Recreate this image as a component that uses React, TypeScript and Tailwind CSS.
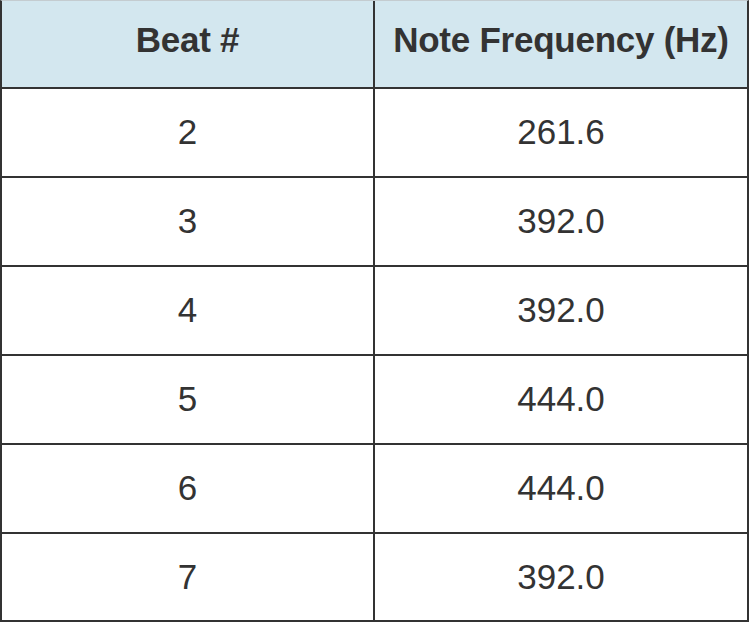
const ROWS = [
  { beat: "2", freq: "261.6" },
  { beat: "3", freq: "392.0" },
  { beat: "4", freq: "392.0" },
  { beat: "5", freq: "444.0" },
  { beat: "6", freq: "444.0" },
  { beat: "7", freq: "392.0" },
];

export default function App() {
  return (
    <div
      className="w-[750px] h-[622px] bg-white overflow-hidden"
      style={{ fontFamily: '"Liberation Sans", Arial, sans-serif' }}
    >
      <div className="w-[749px] h-[622px] flex flex-col border-l-2 border-r-2 border-b-2 border-[#333] border-t border-t-[#c4ccd0]">
        <div className="h-[88px] flex bg-[#d3e7ef] border-b-2 border-[#333] text-[#333] font-bold text-[35px] tracking-[-0.25px]">
          <div className="w-[373px] flex items-center justify-center pb-[7px] border-r-2 border-[#333]">
            Beat #
          </div>
          <div className="flex-1 flex items-center justify-center pb-[7px]">
            Note Frequency (Hz)
          </div>
        </div>
        {ROWS.map((r, i) => (
          <div
            key={i}
            className={
              "flex text-[35px] text-[#333] " +
              (i < ROWS.length - 1 ? "h-[89px] border-b-2 border-[#333]" : "flex-1")
            }
          >
            <div className="w-[373px] flex items-center justify-center border-r-2 border-[#333]">
              {r.beat}
            </div>
            <div className="flex-1 flex items-center justify-center">{r.freq}</div>
          </div>
        ))}
      </div>
    </div>
  );
}
